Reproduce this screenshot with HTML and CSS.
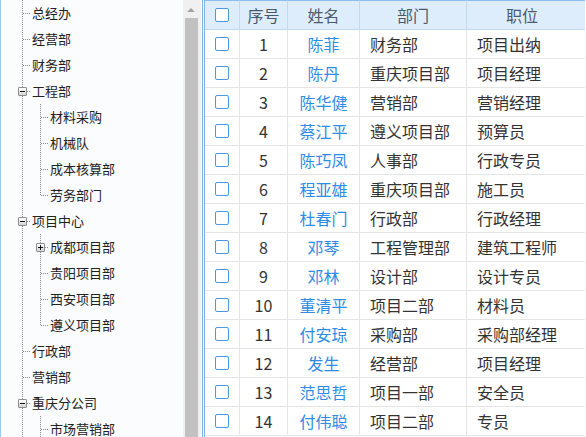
FILE: index.html
```html
<html>
<head>
<meta charset="utf-8">
<title>人员管理</title>
<link rel="stylesheet" href="styles.css">
</head>
<body>

<div class="layout">
    <div class="tree-panel">
        <div class="tree">
            <div class="node"><span class="indent join"></span><span class="title">总经办</span></div>
            <div class="node"><span class="indent join"></span><span class="title">经营部</span></div>
            <div class="node"><span class="indent join"></span><span class="title">财务部</span></div>
            <div class="node"><span class="indent join"><span class="toggle"></span></span><span class="title">工程部</span></div>
            <div class="node"><span class="indent line"></span><span class="indent join"></span><span class="title">材料采购</span></div>
            <div class="node"><span class="indent line"></span><span class="indent join"></span><span class="title">机械队</span></div>
            <div class="node"><span class="indent line"></span><span class="indent join"></span><span class="title">成本核算部</span></div>
            <div class="node"><span class="indent line"></span><span class="indent bottom"></span><span class="title">劳务部门</span></div>
            <div class="node"><span class="indent join"><span class="toggle"></span></span><span class="title">项目中心</span></div>
            <div class="node"><span class="indent line"></span><span class="indent join"><span class="toggle closed"></span></span><span class="title">成都项目部</span></div>
            <div class="node"><span class="indent line"></span><span class="indent join"></span><span class="title">贵阳项目部</span></div>
            <div class="node"><span class="indent line"></span><span class="indent join"></span><span class="title">西安项目部</span></div>
            <div class="node"><span class="indent line"></span><span class="indent bottom"></span><span class="title">遵义项目部</span></div>
            <div class="node"><span class="indent join"></span><span class="title">行政部</span></div>
            <div class="node"><span class="indent join"></span><span class="title">营销部</span></div>
            <div class="node"><span class="indent join"><span class="toggle"></span></span><span class="title">重庆分公司</span></div>
            <div class="node"><span class="indent line"></span><span class="indent join"></span><span class="title">市场营销部</span></div>
        </div>
        <div class="scrollbar">
            <div class="scroll-up"><span class="arrow"></span></div>
            <div class="scroll-thumb"></div>
        </div>
    </div>

    <div class="grid-panel">
        <table class="grid">
            <colgroup>
                <col style="width: 35px">
                <col style="width: 48px">
                <col style="width: 72px">
                <col style="width: 107px">
                <col>
            </colgroup>
            <thead>
                <tr>
                    <th><span class="check"></span></th>
                    <th>序号</th>
                    <th>姓名</th>
                    <th>部门</th>
                    <th class="last">职位</th>
                </tr>
            </thead>
            <tbody id="rows"></tbody>
        </table>
    </div>
</div>

<script>
var people = [
    ['陈菲', '财务部', '项目出纳'],
    ['陈丹', '重庆项目部', '项目经理'],
    ['陈华健', '营销部', '营销经理'],
    ['蔡江平', '遵义项目部', '预算员'],
    ['陈巧凤', '人事部', '行政专员'],
    ['程亚雄', '重庆项目部', '施工员'],
    ['杜春门', '行政部', '行政经理'],
    ['邓琴', '工程管理部', '建筑工程师'],
    ['邓林', '设计部', '设计专员'],
    ['董清平', '项目二部', '材料员'],
    ['付安琼', '采购部', '采购部经理'],
    ['发生', '经营部', '项目经理'],
    ['范思哲', '项目一部', '安全员'],
    ['付伟聪', '项目二部', '专员']
];

var html = '';
for (var i = 0; i < people.length; i++) {
    html += '<tr>' +
        '<td class="cb"><span class="check"></span></td>' +
        '<td class="num">' + (i + 1) + '</td>' +
        '<td class="name">' + people[i][0] + '</td>' +
        '<td class="text">' + people[i][1] + '</td>' +
        '<td class="text">' + people[i][2] + '</td>' +
        '</tr>';
}
document.getElementById('rows').innerHTML = html;
</script>

</body>
</html>
```

FILE: styles.css
```css
body {
    margin: 0;
    font-family: "Noto Sans CJK SC", "Liberation Sans", sans-serif;
    font-size: 13px;
    color: #222;
    background-color: #fff;
    overflow: hidden;
}

.layout {
    display: flex;
    height: 437px;
    overflow: hidden;
}

/* left: department tree */
.tree-panel {
    display: flex;
    width: 201px;
    flex-shrink: 0;
    border-left: 1px solid #9cc8f0;
    border-right: 1px solid #7db4e8;
    background-color: #fff;
}

.tree {
    width: 182px;
    padding-left: 12px;
    box-sizing: border-box;
    background-color: #fbfcfe;
    overflow: hidden;
}

.node {
    display: flex;
    height: 26px;
    white-space: nowrap;
}

.indent {
    display: flex;
    align-items: flex-start;
    width: 18px;
    flex-shrink: 0;
    background-repeat: no-repeat;
}

.line {
    background-image: repeating-linear-gradient(#8a8a8a 0 1px, transparent 1px 2px);
    background-size: 1px 100%;
    background-position: 9px 0;
}

.join,
.bottom {
    background-image:
        repeating-linear-gradient(#8a8a8a 0 1px, transparent 1px 2px),
        repeating-linear-gradient(to right, #8a8a8a 0 1px, transparent 1px 2px);
    background-size: 1px 100%, 8px 1px;
    background-position: 9px 0, 10px 13px;
}

.bottom {
    background-size: 1px 13px, 8px 1px;
}

.toggle {
    display: grid;
    place-items: center;
    width: 9px;
    height: 9px;
    box-sizing: border-box;
    margin: 9px 0 0 5px;
    border: 1px solid #8e8e8e;
    border-radius: 1px;
    background: linear-gradient(#ffffff, #d4d4d4);
}

.toggle::before,
.toggle::after {
    content: "";
    grid-area: 1 / 1;
}

.toggle::before {
    width: 5px;
    height: 1px;
    background-color: #111;
}

.toggle.closed::after {
    width: 1px;
    height: 5px;
    background-color: #111;
}

.title {
    padding-left: 1px;
    line-height: 26px;
}

.scrollbar {
    display: flex;
    flex-direction: column;
    width: 18px;
    margin-right: 1px;
    background-color: #f0f0f0;
}

.scroll-up {
    display: flex;
    justify-content: center;
    height: 18px;
    padding-top: 8px;
    box-sizing: border-box;
}

.arrow {
    width: 0;
    height: 0;
    margin-left: -2px;
    border-left: 4px solid transparent;
    border-right: 4px solid transparent;
    border-bottom: 4px solid #a3a3a3;
}

.scroll-thumb {
    flex: 1;
    width: 13px;
    margin-left: 2px;
    background-color: #c1c1c1;
}

/* right: staff grid */
.grid-panel {
    flex: 1;
    margin-left: 1px;
    border-left: 1px solid #7db4e8;
    overflow: hidden;
}

.grid {
    width: 380px;
    table-layout: fixed;
    border-collapse: separate;
    border-spacing: 0;
}

.grid thead tr {
    height: 30px;
}

.grid th {
    padding: 0;
    font-weight: normal;
    color: #4b5a6a;
    text-align: center;
    background-color: #deedfc;
    border-top: 1px solid #8cbdec;
    border-bottom: 1px solid #c4d9ee;
    border-right: 1px solid #c4d9ee;
}

.grid th.last {
    padding-right: 8px;
    border-right: none;
}

.grid tbody tr {
    height: 29px;
}

.grid td {
    padding: 0;
    border-bottom: 1px solid #e5e5e5;
    border-right: 1px solid #e5e5e5;
    white-space: nowrap;
    overflow: hidden;
}

.grid td:last-child {
    border-right: none;
}

.cb,
.num,
.name {
    text-align: center;
}

.num {
    color: #333;
}

.name {
    color: #2f8ce6;
}

.text {
    padding: 0 10px !important;
    color: #333;
}

.check {
    display: inline-block;
    width: 14px;
    height: 14px;
    box-sizing: border-box;
    border: 1px solid #4a98e2;
    border-radius: 2px;
    background-color: #fff;
    vertical-align: middle;
}
```
